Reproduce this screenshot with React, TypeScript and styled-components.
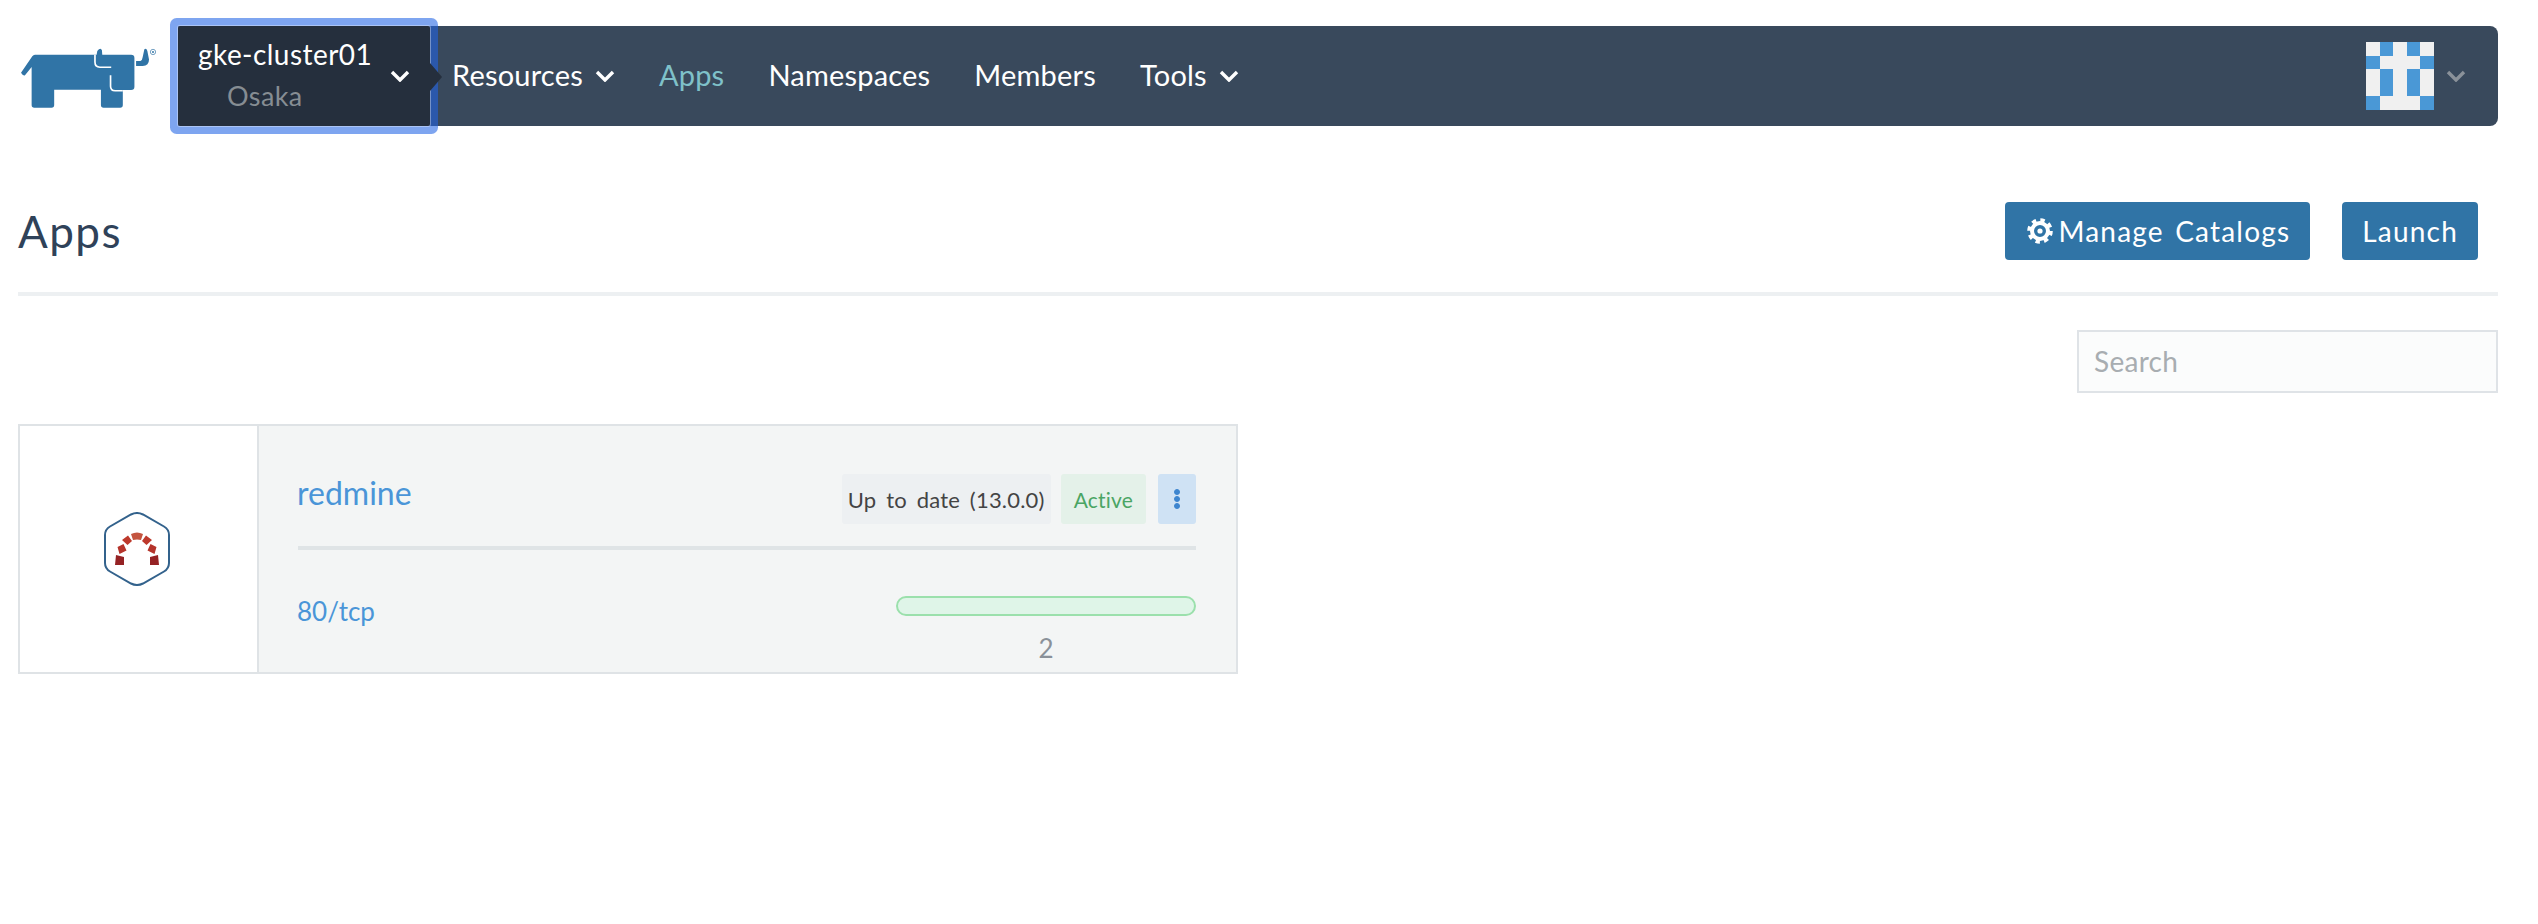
import React from "react";
import styled, { createGlobalStyle } from "styled-components";

const IDENTICON = [
  [0, 1, 0, 1, 0],
  [1, 0, 0, 0, 1],
  [0, 1, 0, 1, 0],
  [0, 1, 0, 1, 0],
  [1, 0, 0, 0, 1],
];

const GlobalStyle = createGlobalStyle`
  html, body {
    margin: 0;
    padding: 0;
    background: #fff;
    font-family: "Lato", "Open Sans", sans-serif;
  }
`;

const Chevron: React.FC<{ color?: string }> = ({ color = "#fff" }) => (
  <ChevronSvg viewBox="0 0 20 12">
    <polyline points="2,2 10,10 18,2" fill="none" stroke={color} strokeWidth="3.4" />
  </ChevronSvg>
);

const RancherLogo = () => (
  <LogoSvg viewBox="50 80 420 190">
    <path
      fill="#3074a6"
      d="M58 158 L92 108 Q95 103 100 103 L286 103 L288 92 Q298 80 302 90 L303 103 L390 103 Q400 103 400 113 L400 200 Q400 210 390 210 L365 210 L365 255 Q365 263 357 263 L307 263 Q299 263 299 255 L299 209 L158 209 L158 255 Q158 263 150 263 L98 263 Q90 263 90 255 L90 140 L70 165 Q64 168 58 158 Z"
    />
    <path
      fill="none"
      stroke="#fff"
      strokeWidth="5"
      d="M281 103 L281 125 Q281 140 296 141 L330 141 M328 165 L328 198 Q328 211 342 212 L365 212"
    />
    <path
      fill="#3074a6"
      d="M405 122 L418 122 Q424 120 425 110 L430 87 Q436 82 439 92 L444 118 Q444 137 425 137 L405 137 Z"
    />
    <circle cx="456" cy="95" r="8" fill="none" stroke="#3074a6" strokeWidth="2" />
    <circle cx="456" cy="95" r="3" fill="#3074a6" />
  </LogoSvg>
);

const GearIcon = () => (
  <GearSvg viewBox="0 0 26 26">
    <circle cx="13" cy="13" r="11" fill="none" stroke="#fff" strokeWidth="3.6" strokeDasharray="4.4 4.24" />
    <circle cx="13" cy="13" r="8" fill="none" stroke="#fff" strokeWidth="4" />
    <circle cx="13" cy="13" r="2.6" fill="#fff" />
  </GearSvg>
);

const RedmineIcon = () => (
  <RedmineSvg viewBox="0 0 66 74">
    <path
      fill="none"
      stroke="#33628c"
      strokeWidth="2"
      d="M27 2.5 Q33 -0.5 39 2.5 L60 14.5 Q65 17.5 65 23 L65 51 Q65 56.5 60 59.5 L39 71.5 Q33 74.5 27 71.5 L6 59.5 Q1 56.500 1 51 L1 23 Q1 17.500 6 14.500 Z"
    />
    <path fill="#c4543f" d="M27 22 Q33 19 39 22 L37 28 Q33 27 29 28 Z" />
    <path fill="#bd392c" d="M18 28 L24 23.500 L28 29 L23.500 33 Z M48 28 L42 23.500 L38 29 L42.500 33 Z" />
    <path fill="#b5342b" d="M13.500 35 L19.500 32 L22.500 38.500 L15.500 42 Z M52.500 35 L46.500 32 L43.500 38.500 L50.500 42 Z" />
    <path fill="#952224" d="M12 43 L20 45 L20 53 L11 53 Z M54 43 L46 45 L46 53 L55 53 Z" />
  </RedmineSvg>
);

export default function App() {
  return (
    <Page>
      <GlobalStyle />
      <TopRow>
        <RancherLogo />
        <NavBar>
          <ClusterSwitch>
            <ClusterText>
              <ClusterName>gke-cluster01</ClusterName>
              <ProjectName>Osaka</ProjectName>
            </ClusterText>
            <Chevron />
            <ClusterArrow />
          </ClusterSwitch>
          <NavList>
            <NavItem>
              Resources
              <Chevron />
            </NavItem>
            <NavItem $active>Apps</NavItem>
            <NavItem>Namespaces</NavItem>
            <NavItem>Members</NavItem>
            <NavItem>
              Tools
              <Chevron />
            </NavItem>
          </NavList>
          <UserMenu>
            <Identicon>
              {IDENTICON.flat().map((cell, index) => (
                <IdenticonCell key={`cell-${index}`} $on={cell === 1} />
              ))}
            </Identicon>
            <Chevron color="#8a9199" />
          </UserMenu>
        </NavBar>
      </TopRow>

      <TitleRow>
        <PageTitle>Apps</PageTitle>
        <TitleActions>
          <ActionButton>
            <GearIcon />
            Manage Catalogs
          </ActionButton>
          <ActionButton>Launch</ActionButton>
        </TitleActions>
      </TitleRow>

      <SearchRow>
        <SearchInput placeholder="Search" />
      </SearchRow>

      <AppCard>
        <CardIcon>
          <RedmineIcon />
        </CardIcon>
        <CardBody>
          <CardHead>
            <AppName>redmine</AppName>
            <Badges>
              <Badge>Up to date (13.0.0)</Badge>
              <Badge $tone="green">Active</Badge>
              <MenuButton>
                <i />
                <i />
                <i />
              </MenuButton>
            </Badges>
          </CardHead>
          <CardFoot>
            <PortLink>80/tcp</PortLink>
            <ScaleColumn>
              <ProgressBar />
              <ScaleCount>2</ScaleCount>
            </ScaleColumn>
          </CardFoot>
        </CardBody>
      </AppCard>
    </Page>
  );
}

const Page = styled.div`
  box-sizing: border-box;
  width: 2538px;
  min-height: 924px;
  padding: 26px 40px 0 18px;
`;

const TopRow = styled.header`
  display: flex;
  align-items: flex-start;
  height: 100px;
`;

const LogoSvg = styled.svg`
  width: 140px;
  height: 63px;
  margin: 21px 20px 0 0;
  flex: none;
`;

const NavBar = styled.nav`
  flex: 1;
  display: flex;
  align-items: center;
  height: 100px;
  background: #39495c;
  border-radius: 0 8px 8px 0;
`;

const ChevronSvg = styled.svg`
  width: 20px;
  height: 12px;
  flex: none;
`;

const ClusterSwitch = styled.div`
  position: relative;
  z-index: 1;
  box-sizing: border-box;
  display: flex;
  align-items: center;
  justify-content: space-between;
  width: 252px;
  height: 100px;
  padding: 0 20px;
  background: #252f3d;
  border-radius: 2px;
  box-shadow: 0 0 0 1px rgba(255, 255, 255, 0.35), 0 0 0 8px rgba(33, 100, 230, 0.58);
`;

const ClusterText = styled.div`
  display: flex;
  flex-direction: column;
`;

const ClusterName = styled.span`
  font-size: 28px;
  line-height: 42px;
  letter-spacing: 0.45px;
  color: #fff;
  margin-top: -3px;
  white-space: nowrap;
`;

const ProjectName = styled.span`
  font-size: 27px;
  line-height: 42px;
  letter-spacing: 0.4px;
  color: #868d93;
  margin-left: 29px;
`;

const ClusterArrow = styled.span`
  position: absolute;
  right: -12px;
  top: 37px;
  width: 0;
  height: 0;
  border-top: 14px solid transparent;
  border-bottom: 14px solid transparent;
  border-left: 12px solid #252f3d;
`;

const NavList = styled.div`
  display: flex;
  align-items: center;
  gap: 44px;
  margin: 0 0 4px 22px;
`;

const NavItem = styled.span<{ $active?: boolean }>`
  display: inline-flex;
  align-items: center;
  gap: 12px;
  font-size: 29px;
  letter-spacing: 0.2px;
  color: ${(props) => (props.$active ? "#7fc1c9" : "#fff")};

  ${ChevronSvg} {
    margin-top: 4px;
  }
`;

const UserMenu = styled.div`
  display: flex;
  align-items: center;
  gap: 12px;
  margin-left: auto;
  padding-right: 32px;
`;

const Identicon = styled.div`
  display: grid;
  grid-template-columns: repeat(5, 1fr);
  grid-template-rows: repeat(5, 1fr);
  width: 68px;
  height: 68px;
`;

const IdenticonCell = styled.span<{ $on: boolean }>`
  background: ${(props) => (props.$on ? "#4a98d6" : "#f0f0f0")};
`;

const TitleRow = styled.div`
  display: flex;
  align-items: center;
  justify-content: space-between;
  margin-top: 76px;
  padding-bottom: 32px;
  border-bottom: 4px solid #edf0f2;
`;

const PageTitle = styled.h1`
  margin: 0;
  font-size: 44px;
  font-weight: 400;
  line-height: 58px;
  letter-spacing: 1.5px;
  color: #2f4259;
`;

const TitleActions = styled.div`
  display: flex;
  gap: 32px;
  padding-right: 20px;
`;

const ActionButton = styled.button`
  display: flex;
  align-items: center;
  height: 58px;
  padding: 0 20px;
  border: 0;
  border-radius: 4px;
  background: #3074a6;
  color: #fff;
  font-family: "Lato", sans-serif;
  font-size: 28px;
  letter-spacing: 1.2px;
  word-spacing: 3px;
`;

const GearSvg = styled.svg`
  width: 26px;
  height: 26px;
  margin: 0 5px 0 2px;
`;

const SearchRow = styled.div`
  display: flex;
  justify-content: flex-end;
  margin-top: 34px;
`;

const SearchInput = styled.input`
  box-sizing: border-box;
  width: 421px;
  height: 63px;
  padding: 0 15px 2px;
  border: 2px solid #dfe3e7;
  background: #fbfcfc;
  font-family: "Lato", sans-serif;
  font-size: 28px;
  letter-spacing: 0.3px;
  outline: none;

  &::placeholder {
    color: #a8adb1;
    opacity: 1;
  }
`;

const AppCard = styled.section`
  box-sizing: border-box;
  display: flex;
  width: 1220px;
  height: 250px;
  margin-top: 31px;
  border: 2px solid #dfe3e6;
`;

const CardIcon = styled.div`
  box-sizing: border-box;
  display: flex;
  align-items: center;
  justify-content: center;
  width: 239px;
  padding-right: 3px;
  flex: none;
  background: #fff;
  border-right: 2px solid #dfe3e6;
`;

const RedmineSvg = styled.svg`
  width: 66px;
  height: 74px;
`;

const CardBody = styled.div`
  flex: 1;
  display: flex;
  flex-direction: column;
  padding: 48px 40px 0 39px;
  background: #f3f5f5;
`;

const CardHead = styled.div`
  display: flex;
  align-items: center;
  justify-content: space-between;
  padding-bottom: 22px;
  border-bottom: 4px solid #dfe4e6;
`;

const AppName = styled.span`
  font-size: 32px;
  color: #4a95d8;
  margin: -14px 0 0 -1px;
`;

const Badges = styled.div`
  display: flex;
  align-items: center;
`;

const Badge = styled.span<{ $tone?: "green" }>`
  display: flex;
  align-items: center;
  height: 50px;
  margin-right: ${(props) => (props.$tone ? "12px" : "10px")};
  padding: ${(props) => (props.$tone ? "0 13px" : "0 6px")};
  border-radius: 3px;
  font-size: ${(props) => (props.$tone ? "21px" : "22px")};
  letter-spacing: 0.2px;
  word-spacing: 4px;
  background: ${(props) => (props.$tone ? "#e4f1e9" : "#edf0f2")};
  color: ${(props) => (props.$tone ? "#4aa564" : "#444")};
`;

const MenuButton = styled.span`
  display: flex;
  flex-direction: column;
  align-items: center;
  justify-content: center;
  gap: 1px;
  width: 38px;
  height: 50px;
  border-radius: 3px;
  background: #cfe2f4;

  i {
    width: 4px;
    height: 4px;
    border-radius: 50%;
    background: #3d85cf;
    border: 0.5px solid #3d85cf;
  }
`;

const CardFoot = styled.div`
  display: flex;
  justify-content: space-between;
  padding-top: 46px;
`;

const PortLink = styled.span`
  font-size: 26px;
  line-height: 32px;
  color: #4a95d8;
  margin: -1px 0 0 -1px;
`;

const ScaleColumn = styled.div`
  display: flex;
  flex-direction: column;
  align-items: center;
  width: 300px;
`;

const ProgressBar = styled.div`
  box-sizing: border-box;
  width: 100%;
  height: 20px;
  border: 2px solid #9be0ac;
  border-radius: 10px;
  background: #dff5e8;
`;

const ScaleCount = styled.span`
  margin-top: 18px;
  font-size: 26px;
  line-height: 28px;
  color: #8a9199;
`;
